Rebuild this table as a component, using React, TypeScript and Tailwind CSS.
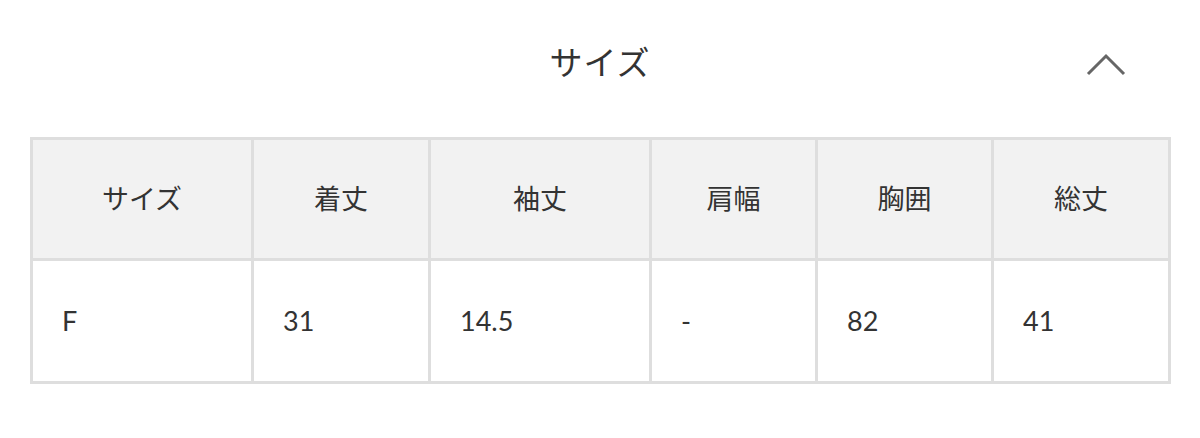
import React from "react";

const headers = ["サイズ", "着丈", "袖丈", "肩幅", "胸囲", "総丈"];
const values = ["F", "31", "14.5", "-", "82", "41"];
const widths = ["w-[221px]", "w-[177px]", "w-[221px]", "w-[166px]", "w-[176px]", "w-[177px]"];

export default function App() {
  return (
    <div
      className="w-[1200px] h-[438px] bg-white px-[30px] text-[#333]"
      style={{ fontFamily: "Lato, 'Noto Sans CJK JP', sans-serif" }}
    >
      <div className="grid grid-cols-[1fr_auto_1fr] items-center h-[124px]">
        <div />
        <h2 className="text-[33px] leading-none tracking-[1px] text-[#333]">サイズ</h2>
        <div className="flex justify-end pr-[44px] pt-[6px]">
          <svg width="40" height="24" viewBox="0 0 40 24" fill="none">
            <path d="M2 21 L20 3 L38 21" stroke="#666" strokeWidth="3" />
          </svg>
        </div>
      </div>

      <table className="mt-[13px] w-[1138px] border-collapse border-[3px] border-[#dedede] table-fixed">
        <thead>
          <tr className="bg-[#f2f2f2] h-[121px]">
            {headers.map((h, i) => (
              <th
                key={h}
                className={`${widths[i]} border-[3px] border-[#dedede] text-center font-normal text-[27px] text-[#333]`}
              >
                {h}
              </th>
            ))}
          </tr>
        </thead>
        <tbody>
          <tr className="h-[123px]">
            {values.map((v, i) => (
              <td
                key={i}
                className="border-[3px] border-[#dedede] pl-[29px] text-left text-[27px] text-[#333]"
              >
                {v}
              </td>
            ))}
          </tr>
        </tbody>
      </table>
    </div>
  );
}
